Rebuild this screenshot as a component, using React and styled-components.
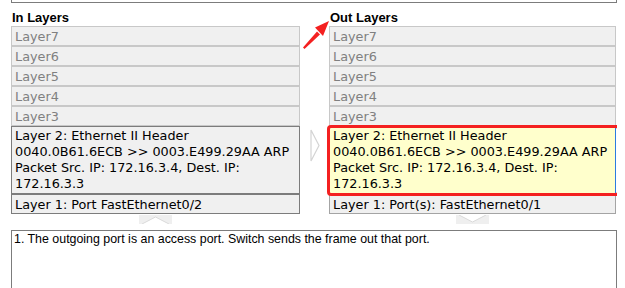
import React from "react";
import styled, { createGlobalStyle } from "styled-components";

const GlobalStyle = createGlobalStyle`
  html, body {
    margin: 0;
    padding: 0;
    background: #ffffff;
  }
  body {
    font-family: "Liberation Sans", Arial, sans-serif;
    overflow: hidden;
  }
`;

const upper = ["Layer7", "Layer6", "Layer5", "Layer4", "Layer3"];

const inLayer2 = [
  "Layer 2: Ethernet II Header",
  "0040.0B61.6ECB >> 0003.E499.29AA ARP",
  "Packet Src. IP: 172.16.3.4, Dest. IP:",
  "172.16.3.3",
];

const App = () => {
  return (
    <Page>
      <GlobalStyle />
      <TopBox />
      <Columns>
        <Column>
          <Heading>In Layers</Heading>
          {upper.map((l) => (
            <Row key={l}>{l}</Row>
          ))}
          <Detail>
            {inLayer2.map((t) => (
              <div key={t}>{t}</div>
            ))}
          </Detail>
          <Row active dark>
            Layer 1: Port FastEthernet0/2
          </Row>
          <Tab>
            <svg width="33" height="9" viewBox="0 0 33 9">
              <rect x="0" y="0" width="33" height="9" fill="#efefef" />
              <polygon points="3,9 16.5,2 30,9" fill="#ffffff" />
              <polyline points="3,9 16.5,2 30,9" fill="none" stroke="#dadada" strokeWidth="1" />
            </svg>
          </Tab>
        </Column>

        <Between>
          <svg width="10" height="33" viewBox="0 0 10 33">
            <polygon points="1,1 9,16.5 1,32" fill="#ffffff" stroke="#d4d4d4" strokeWidth="1.2" />
          </svg>
        </Between>

        <Column>
          <Heading>Out Layers</Heading>
          {upper.map((l) => (
            <Row key={l}>{l}</Row>
          ))}
          <Detail selected>
            {inLayer2.map((t) => (
              <div key={t}>{t}</div>
            ))}
          </Detail>
          <Row active>Layer 1: Port(s): FastEthernet0/1</Row>
          <Tab>
            <svg width="33" height="9" viewBox="0 0 33 9">
              <rect x="0" y="0" width="33" height="9" fill="#efefef" />
              <polygon points="3,0 16.5,7 30,0" fill="#ffffff" />
              <polyline points="3,0 16.5,7 30,0" fill="none" stroke="#dadada" strokeWidth="1" />
            </svg>
          </Tab>
        </Column>
      </Columns>

      <Notes>1. The outgoing port is an access port. Switch sends the frame out that port.</Notes>

      <Pointer width="32" height="32" viewBox="0 0 32 32">
        <polygon points="2,28.5 3.5,30 19,15.5 16,12.5" fill="#f42020" />
        <polygon points="28,2 14,8.5 22,17" fill="#f42020" />
      </Pointer>
    </Page>
  );
};

export default App;

const Page = styled.div`
  position: relative;
  width: 606px;
  padding-left: 11px;
  height: 288px;
  overflow: hidden;
`;

const TopBox = styled.div`
  height: 2px;
  border: 1px solid #7c7c7c;
  border-top: none;
`;

const Columns = styled.div`
  display: grid;
  grid-template-columns: 289px 29px 287px;
  margin-top: 7px;
`;

const Column = styled.div`
  display: flex;
  flex-direction: column;
`;

const Heading = styled.div`
  font-family: "Liberation Sans", Arial, sans-serif;
  font-weight: bold;
  font-size: 13px;
  line-height: 16px;
  height: 16px;
  color: #000;
  padding-left: 1px;
`;

const Row = styled.div`
  height: 18px;
  line-height: 19px;
  border: 1px solid ${(p) => (p.dark ? "#7c7c7c" : p.active ? "#a4a4a4" : "#c8c8c8")};
  background: #f0f0f0;
  color: ${(p) => (p.active ? "#000" : "#808080")};
  font-family: "DejaVu Sans", Verdana, sans-serif;
  font-size: 12.8px;
  padding: 0 3px;
  white-space: nowrap;
  overflow: hidden;
`;

const Detail = styled.div`
  position: relative;
  border: 1px solid #7c7c7c;
  border-right-color: ${(p) => (p.selected ? "#2c7be0" : "#7c7c7c")};
  background: ${(p) => (p.selected ? "#ffffcc" : "#f0f0f0")};
  color: #000;
  font-family: "DejaVu Sans", Verdana, sans-serif;
  font-size: 12.8px;
  line-height: 16px;
  padding: 1px 3px;
  white-space: nowrap;

  ${(p) =>
    p.selected &&
    `
    &::after {
      content: "";
      position: absolute;
      top: -2px;
      left: -3px;
      right: -5px;
      bottom: -3px;
      border: 3px solid #f42020;
      border-radius: 4px;
      pointer-events: none;
    }
  `}
`;

const Tab = styled.div`
  display: flex;
  justify-content: center;
  margin-top: 1px;
  height: 9px;

  svg {
    display: block;
  }
`;

const Between = styled.div`
  display: flex;
  justify-content: center;
  padding-top: 119px;

  svg {
    display: block;
  }
`;

const Notes = styled.div`
  margin-top: 6px;
  height: 80px;
  border: 1px solid #7c7c7c;
  padding: 1px 2px 0;
  font-family: "Liberation Sans", Arial, sans-serif;
  font-size: 12.4px;
  line-height: 14px;
  color: #000;
`;

const Pointer = styled.svg`
  position: absolute;
  left: 301px;
  top: 19px;
`;
